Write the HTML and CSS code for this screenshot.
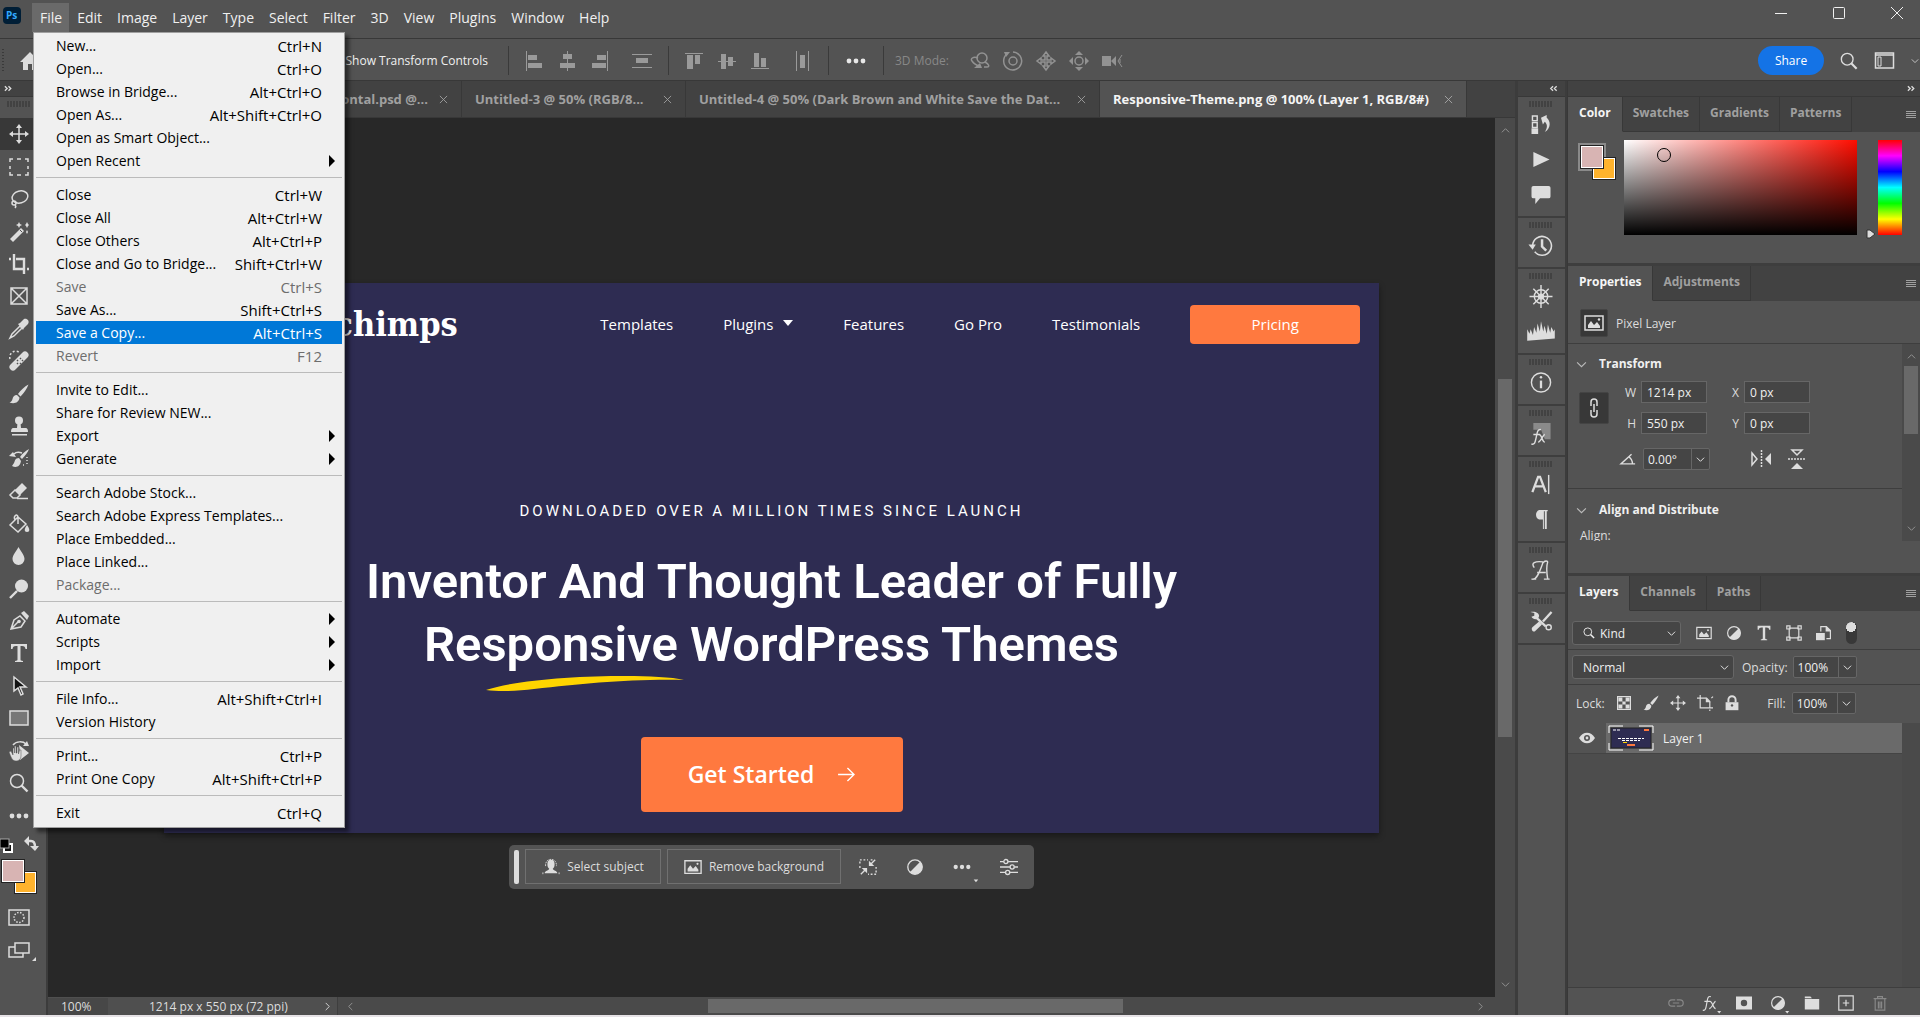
FILE: index.html
```html
<!DOCTYPE html>
<html lang="en">

<head>
  <meta charset="UTF-8" />
  <meta name="viewport" content="width=device-width, initial-scale=1.0" />
  <title>Responsive-Theme.png @ 100% (Layer 1, RGB/8#)</title>
  <link rel="stylesheet" href="styles.css">
</head>

<body>

  <!-- Icon sprite -->
  <svg class="sprite" aria-hidden="true">
    <symbol id="chev-down" viewBox="0 0 10 10"><path d="M1 3l4 4 4-4" class="line" /></symbol>
    <symbol id="chev-up" viewBox="0 0 10 10"><path d="M1 7l4-4 4 4" class="line" /></symbol>
    <symbol id="chev-left" viewBox="0 0 10 10"><path d="M7 1L3 5l4 4" class="line" /></symbol>
    <symbol id="chev-right" viewBox="0 0 10 10"><path d="M3 1l4 4-4 4" class="line" /></symbol>
    <symbol id="dbl-right" viewBox="0 0 10 10"><path d="M1 2.500l2.500 2.500L1 7.500M5 2.500l2.500 2.500L5 7.500" class="bold" /></symbol>
    <symbol id="dbl-left" viewBox="0 0 10 10"><path d="M4.500 2.500L2 5l2.500 2.500M8.500 2.500L6 5l2.500 2.500" class="bold" /></symbol>
    <symbol id="close" viewBox="0 0 10 10"><path d="M1 1l8 8M9 1L1 9" class="line" /></symbol>
    <symbol id="lines" viewBox="0 0 10 8"><path d="M0 .5h10M0 2.500h10M0 4.500h10M0 6.500h10" class="line" /></symbol>
    <symbol id="dots" viewBox="0 0 20 20"><circle cx="3" cy="10" r="2.400" /><circle cx="10" cy="10" r="2.400" /><circle cx="17" cy="10" r="2.400" /></symbol>
    <symbol id="search" viewBox="0 0 20 20"><circle cx="8" cy="8" r="6.500" class="bold" /><path d="M12.500 12.500l6 6" class="thick" /></symbol>
    <symbol id="move" viewBox="0 0 20 20"><path d="M10 3v14M3 10h14" class="bold" /><path d="M10 0l3 4H7zM10 20l3-4H7zM0 10l4-3v6zM20 10l-4-3v6z" /></symbol>
    <symbol id="half" viewBox="0 0 20 20"><circle cx="10" cy="10" r="8" class="bold" /><path d="M16 4A8.500 8.500 0 0 1 4 16z" /></symbol>
    <symbol id="picture" viewBox="0 0 20 20"><path d="M1 3h18v14H1z" class="bold" /><path d="M4 15v-3l3-4 3 4 3-3 3 4v2z" /><circle cx="15" cy="6.500" r="1.200" /></symbol>
    <symbol id="brush" viewBox="0 0 20 20"><path d="M19.500.5c-4 2-8 6-10.500 9.500l2.500 2.500c3-3 6.500-8 8-12zM8 11c-3 0-4 2-4.500 4-.4 1.800-1.500 3-3 3.500 4.500 1.500 9.500.5 10-5z" /></symbol>
    <symbol id="type" viewBox="0 0 20 20"><path d="M2 1h16v5h-1.500C16.200 4 15.500 3 13 3h-1.500v13.500c0 1 .8 1.300 2.500 1.500v1H6v-1c1.700-.2 2.500-.5 2.500-1.500V3H7C4.500 3 3.800 4 3.500 6H2z" /></symbol>
    <symbol id="fx" viewBox="0 0 20 20"><path d="M1 19c4 1 4-4 5-9s1-9 5-8M3 8h7M10 8c3 0 4 9 7 9M17 8c-2 0-5 9-8 9" class="bold" /></symbol>
  </svg>

  <header class="menubar">
    <svg class="logo" viewBox="0 0 18 17"><rect width="18" height="17" rx="4" fill="#001e36" /><text x="3" y="12" class="logo-text">Ps</text></svg>
    <nav>
      <button class="open">File</button>
      <button>Edit</button>
      <button>Image</button>
      <button>Layer</button>
      <button>Type</button>
      <button>Select</button>
      <button>Filter</button>
      <button>3D</button>
      <button>View</button>
      <button>Plugins</button>
      <button>Window</button>
      <button>Help</button>
    </nav>
    <div class="window-buttons">
      <button aria-label="Minimize"><svg viewBox="0 0 12 12"><path d="M0 6.500h12" class="line" /></svg></button>
      <button aria-label="Maximize"><svg viewBox="0 0 12 12"><rect x=".5" y=".5" width="11" height="11" rx="1" class="line" /></svg></button>
      <button aria-label="Close"><svg viewBox="0 0 12 12"><path d="M0 0l12 12M12 0L0 12" class="line" /></svg></button>
    </div>
  </header>

  <div class="options">
    <span class="grip-v"></span>
    <svg class="home" viewBox="0 0 20 20"><path d="M10 1L0 11h3v8h5v-6h4v6h5v-8h3z" /></svg>
    <label class="transform-controls"><input type="checkbox"> Show Transform Controls</label>
    <div class="group aligns">
      <svg viewBox="0 0 20 20"><path d="M2.500 0v20" class="line" /><path d="M4 4h9v5H4zM4 12h14v5H4z" /></svg>
      <svg viewBox="0 0 20 20"><path d="M10.500 0v20" class="line" /><path d="M6 3h9v5H6zM3 12h15v5H3z" /></svg>
      <svg viewBox="0 0 20 20"><path d="M17.500 0v20" class="line" /><path d="M7 4h9v5H7zM2 12h14v5H2z" /></svg>
      <svg class="spaced" viewBox="0 0 20 20"><path d="M0 3.500h20M0 16.500h20" class="line" /><path d="M4 7h12v5H4z" /></svg>
    </div>
    <div class="group aligns">
      <svg viewBox="0 0 20 20"><path d="M1 2.500h18" class="line" /><path d="M3 4h6v14H3zM11 4h5v9h-5z" /></svg>
      <svg viewBox="0 0 20 20"><path d="M1 10.500h18" class="line" /><path d="M4 3h5v15H4zM11 6h5v9h-5z" /></svg>
      <svg viewBox="0 0 20 20"><path d="M1 17.500h18" class="line" /><path d="M4 2h5v14H4zM11 7h5v9h-5z" /></svg>
      <svg class="spaced" viewBox="0 0 20 20"><path d="M4.500 0v20M16.500 0v20" class="line" /><path d="M8 4h5v13H8z" /></svg>
    </div>
    <div class="group more"><svg viewBox="0 0 20 20"><use href="#dots" /></svg></div>
    <div class="group mode">
      <span>3D Mode:</span>
      <svg viewBox="0 0 20 20"><circle cx="12" cy="7" r="5" class="bold" /><path d="M8 7c-5-2-8 1-6 3 2 3 6 5 9 6M15 11c4 2 5 5 2 5h-3" class="bold" /><path d="M4 17l6-5 2 5z" /></svg>
      <svg viewBox="0 0 20 20"><path d="M4 3a9 9 0 1 0 6-2" class="bold" /><circle cx="10" cy="10" r="4" class="bold" /><path d="M1 1h6l-4 5z" /></svg>
      <svg viewBox="0 0 20 20"><path d="M10 1l3 4h-2v4h4V7l4 3-4 3v-2h-4v4h2l-3 4-3-4h2v-4H5v2l-4-3 4-3v2h4V5H7z" class="bold" /></svg>
      <svg viewBox="0 0 20 20"><circle cx="10" cy="10" r="4" class="bold" /><path d="M10 0l4 4H6zM10 20l4-4H6zM0 10l4-4v8zM20 10l-4-4v8z" /></svg>
      <svg viewBox="0 0 20 20"><path d="M0 5h9v10H0zM9 10l5-5v10z" /><path d="M20 4l-4 6 4 6M18 8v4" class="line" /></svg>
    </div>
    <div class="options-right">
      <button class="share">Share</button>
      <svg class="search-icon" viewBox="0 0 20 20"><use href="#search" /></svg>
      <svg class="workspace" viewBox="0 0 20 17"><path d="M1 1h18v15H1zM1 3h18" class="bold" /><path d="M3.500 5v9h3V5z" class="line" /></svg>
      <svg class="chev" viewBox="0 0 10 10"><use href="#chev-down" /></svg>
    </div>
  </div>

  <main>
    <aside class="toolbar">
      <div class="strip"><svg viewBox="0 0 10 10"><use href="#dbl-right" /></svg></div>
      <span class="grip"></span>
      <div class="tools">
        <button class="active" aria-label="Move"><svg viewBox="0 0 20 20"><use href="#move" /></svg></button>
        <button aria-label="Marquee"><svg viewBox="0 0 20 20"><path d="M1 5V2h3M8 2h4M16 2h3v3M19 9v3M19 15v3h-3M12 18H8M4 18H1v-3M1 12V9" class="bold" /></svg></button>
        <button aria-label="Lasso"><svg viewBox="0 0 20 20"><ellipse cx="11" cy="8" rx="8" ry="6" transform="rotate(-15 11 8)" class="bold" /><circle cx="5" cy="14" r="2" class="bold" /><path d="M6 16c1 1 1 2 0 3" class="bold" /></svg></button>
        <button aria-label="Wand"><svg viewBox="0 0 20 20"><path d="M1 17L12 6l3 3L4 20z" /><path d="M11 8l2 2" stroke="#535353" stroke-width="1" /><path d="M10 0l1 2 2 1-2 1-1 2-1-2-2-1 2-1zM18 0l1 2 1 1-1 1-1 2-1-2-1-1 1-1zM18 8l1 2-1 2-1-2z" /></svg></button>
        <button aria-label="Crop"><svg viewBox="0 0 20 20"><path d="M5 0v15h11M0 5h2M7 5h8v15M18 15h2" class="thick" /></svg></button>
        <button aria-label="Frame"><svg viewBox="0 0 20 20"><path d="M2 2h16v16H2zM2 2l16 16M18 2L2 18" class="bold" /></svg></button>
        <button aria-label="Eyedropper"><svg viewBox="0 0 20 20"><path d="M11 7l2 2-8 8-4 2 2-4z" class="bold" /><path d="M9 5l2-1 4-4c3-1 6 2 4 5l-4 4-1 2z" /></svg></button>
        <button aria-label="Healing brush"><svg viewBox="0 0 20 20"><path d="M4 16L16 4" stroke="currentColor" stroke-width="7" stroke-linecap="round" /><path d="M1 8a6 6 0 0 1 10-6" class="bold" stroke-dasharray="2 2" /><path d="M8 9l1 1M11 12l1 1M11 7l1 1M13 9l1 1M8 12l1 1" stroke="#535353" stroke-width="1.500" /></svg></button>
        <button aria-label="Brush"><svg viewBox="0 0 20 20"><use href="#brush" /></svg></button>
        <button aria-label="Clone stamp"><svg viewBox="0 0 20 20"><circle cx="10" cy="4.500" r="4" /><path d="M8.500 7h3l.5 5h5c1 0 2 1 2 4H2c0-3 1-4 2-4h4zM3 18h15v1.500H3z" /></svg></button>
        <button aria-label="History brush"><svg viewBox="0 0 20 20"><path d="M20 0c-4 2-7 5-9 8l2 2c3-3 6-7 7-10zM10 9c-4 0-4 3-5 5l-2 3c4 2 8 1 9-5zM0 7l4-4 3 5z" /><path d="M5 5c2-2 5-2 8-1" class="bold" /><path d="M18 8v9M14 16h3" class="bold" stroke-dasharray="1 2" /></svg></button>
        <button aria-label="Eraser"><svg viewBox="0 0 20 20"><path d="M6 9l7-7 5 5-7 7z" /><path d="M6 9l5 5-3 3H4l-3-3z" class="bold" /><path d="M8 17.500h11" class="bold" /></svg></button>
        <button aria-label="Paint bucket"><svg viewBox="0 0 20 20"><path d="M1 11l8-8 8 7-8 8zM6 6c-2-4 2-7 3-3v7" class="bold" /><path d="M18 11c3 4 3 7 0 7s-3-3 0-7z" /></svg></button>
        <button aria-label="Blur"><svg viewBox="0 0 20 20"><path d="M9.500 1c2 4 6 8 6 12a6 6 0 0 1-12 0c0-4 4-8 6-12z" /></svg></button>
        <button aria-label="Dodge"><svg viewBox="0 0 20 20"><circle cx="12.500" cy="7" r="6.500" /><path d="M8 12l-7 7" class="thick" /></svg></button>
        <button aria-label="Pen"><svg viewBox="0 0 20 20"><path d="M2 18L5 9l6-4 5 5-4 6zM2 18l7-7" class="bold" /><circle cx="10" cy="10.500" r="1.800" /><path d="M12 2l3-2 5 5-2 4z" /></svg></button>
        <button aria-label="Type"><svg viewBox="0 0 20 20"><use href="#type" /></svg></button>
        <button aria-label="Path selection"><svg viewBox="0 0 20 20"><path d="M5 1v14l4-3 3 7 2-1-3-7h6z" fill="#111" class="outline" /></svg></button>
        <button aria-label="Rectangle"><svg viewBox="0 0 20 20"><rect x="1" y="3" width="18" height="14" fill="#777" class="outline" /></svg></button>
        <button aria-label="Rotate view"><svg viewBox="0 0 20 20"><path d="M4 4c3-4 10-4 13-1" class="bold" /><path d="M20 5h-6l4-5zM10 4l10 8-9 7v-8z" /><path d="M0 11l2-1 2 4V7h1.500v5V5H7v7h1V6h1.500v7l1-4H12v6c0 3-2 5-5 5-4 0-5-4-7-9z" stroke="#535353" stroke-width=".5" /></svg></button>
        <button aria-label="Zoom"><svg viewBox="0 0 20 20"><use href="#search" /></svg></button>
        <button aria-label="More tools"><svg viewBox="0 0 20 20"><use href="#dots" /></svg></button>
      </div>
      <svg class="colors" viewBox="0 0 45 64">
        <rect x="4" y="8" width="8" height="8" fill="#111" stroke="#fff" stroke-width="2" />
        <rect x="0" y="3" width="9" height="9" fill="#000" stroke="#aaa" />
        <path d="M28 5h3c3 0 4 2 4 6" class="thick" /><path d="M24 5l5-5v10zM35 15l-5-5h9z" />
        <rect x="14.500" y="35.500" width="22" height="22" fill="#ffb32d" stroke="#222" /><rect x="15.500" y="36.500" width="20" height="20" fill="none" stroke="#fff" />
        <rect x="1.500" y="23.500" width="23" height="23" fill="#d8b4b3" stroke="#222" /><rect x="2.500" y="24.500" width="21" height="21" fill="none" stroke="#fff" />
      </svg>
      <svg class="tool-low" viewBox="0 0 28 20"><rect x="1" y="2" width="20" height="15" class="bold" /><circle cx="11" cy="9.500" r="5" class="bold" stroke-dasharray="1.500 1.500" /></svg>
      <svg class="tool-low" viewBox="0 0 28 20"><path d="M7 6H1v10h14v-4" class="bold" /><rect x="7" y="2" width="14" height="10" class="bold" /><path d="M28 16v4h-4z" /></svg>
    </aside>

    <section class="document">
      <div class="tabs">
        <div class="tab tab-hidden"><span>ontal.psd @...</span><button aria-label="Close"><svg viewBox="0 0 10 10"><use href="#close" /></svg></button></div>
        <div class="tab tab-small"><span>Untitled-3 @ 50% (RGB/8...</span><button aria-label="Close"><svg viewBox="0 0 10 10"><use href="#close" /></svg></button></div>
        <div class="tab tab-large"><span>Untitled-4 @ 50% (Dark Brown and White Save the Dat...</span><button aria-label="Close"><svg viewBox="0 0 10 10"><use href="#close" /></svg></button></div>
        <div class="tab tab-active"><span>Responsive-Theme.png @ 100% (Layer 1, RGB/8#)</span><button aria-label="Close"><svg viewBox="0 0 10 10"><use href="#close" /></svg></button></div>
      </div>

      <div class="workarea">
        <div class="canvas">
          <article class="artwork">
            <div class="site-nav">
              <strong class="brand">chimps</strong>
              <nav>
                <a href="#">Templates</a>
                <a href="#">Plugins <svg viewBox="0 0 10 6"><path d="M0 0h10L5 6z" /></svg></a>
                <a href="#">Features</a>
                <a href="#">Go Pro</a>
                <a href="#">Testimonials</a>
              </nav>
              <a href="#" class="pricing">Pricing</a>
            </div>
            <p class="tagline">DOWNLOADED OVER A MILLION TIMES SINCE LAUNCH</p>
            <h1>Inventor And Thought Leader of Fully<br>Responsive WordPress Themes</h1>
            <svg class="swoosh" viewBox="0 0 198 16"><path d="M0 14C30 4 90 0 140 0c22 0 46 1 58 4-60-1-100 4-150 9-16 2-34 3-48 1z" /></svg>
            <a href="#" class="cta">Get Started <svg viewBox="0 0 18 16"><path d="M0 8h17M10 1l7 7-7 7" class="bold" /></svg></a>

            <div class="taskbar">
              <span class="handle"></span>
              <button><svg viewBox="0 0 20 20"><path d="M10 2c3 0 4 2 4 5s-1 4-2 5c0 2 5 2 5 5H3c0-3 5-3 5-5-1-1-2-2-2-5s1-5 4-5z" /><path d="M4 9c-1-10 13-10 12 0M1 18v-3M19 18v-3" class="line" stroke-dasharray="2 1" /></svg>Select subject</button>
              <button><svg viewBox="0 0 20 20"><use href="#picture" /></svg>Remove background</button>
              <div class="task-icons">
                <svg viewBox="0 0 20 20"><path d="M1 6V2h9M19 10v8h-9M1 9v3M13 2h2" class="bold" stroke-dasharray="2 2" /><path d="M11 9V3l6 6zM9 11v6l-6-6z" /><path d="M13 7l5-5M7 13l-5 5" class="bold" /></svg>
                <svg viewBox="0 0 20 20"><use href="#half" /></svg>
                <svg viewBox="0 0 20 20"><use href="#dots" /><path d="M23 24h5l-2.500 3z" /></svg>
                <svg viewBox="0 0 20 20"><path d="M0 4h4M9 4h11M0 10h11M16 10h4M0 16h6M11 16h9" class="bold" /><circle cx="6.500" cy="4" r="2.300" class="bold" /><circle cx="13.500" cy="10" r="2.300" class="bold" /><circle cx="8.500" cy="16" r="2.300" class="bold" /></svg>
              </div>
            </div>
          </article>
        </div>
        <div class="scroll-v">
          <svg viewBox="0 0 10 10"><use href="#chev-up" /></svg>
          <div class="track"><span class="thumb"></span></div>
          <svg viewBox="0 0 10 10"><use href="#chev-down" /></svg>
        </div>
      </div>

      <footer class="status">
        <span class="zoom">100%</span>
        <span class="size">1214 px x 550 px (72 ppi)</span>
        <svg viewBox="0 0 10 10"><use href="#chev-right" /></svg>
        <div class="scroll-h">
          <svg viewBox="0 0 10 10"><use href="#chev-left" /></svg>
          <div class="track"><span class="thumb"></span></div>
          <svg viewBox="0 0 10 10"><use href="#chev-right" /></svg>
        </div>
      </footer>
    </section>

    <aside class="dock">
      <div class="strip end"><svg viewBox="0 0 10 10"><use href="#dbl-left" /></svg></div>
      <div class="dock-group"><span class="grip"></span>
        <svg viewBox="0 0 20 20"><path d="M1 1h5v5H1zM1 8h5v5H1z" class="bold" /><path d="M0 14h7v6H0zM10 3l6-3v3c4 3 5 11-2 15 3-5 3-8 0-11l-2 3z" /></svg>
        <svg viewBox="0 0 20 20"><path d="M2 2l17 8-17 8z" /></svg>
        <svg viewBox="0 0 20 20"><path d="M2 1h16a2 2 0 0 1 2 2v9a2 2 0 0 1-2 2h-9l-5 6v-6H2a2 2 0 0 1-2-2V3a2 2 0 0 1 2-2z" /></svg>
      </div>
      <div class="dock-group"><span class="grip"></span>
        <svg class="wide" viewBox="0 0 24 22"><path d="M4 11a9 9 0 1 1 2 6" class="bold" /><path d="M0 10h7l-3 5z" /><path d="M13 5v7l4 4" class="thick" /></svg>
      </div>
      <div class="dock-group"><span class="grip"></span>
        <svg class="wide" viewBox="0 0 24 24"><circle cx="12" cy="12" r="7" class="bold" /><circle cx="12" cy="12" r="2.500" class="bold" /><path d="M12 0v24M0 12h24M4 4l16 16M20 4L4 20" class="bold" /></svg>
        <svg class="wide" viewBox="0 0 24 20"><path d="M0 18V8l2 4 1-4 2 5 1-7 2 5 1-8 2 7 1-9 2 9 1-5 2 7 1-8 2 7 1-5 2 4 1-2v8z" /></svg>
      </div>
      <div class="dock-group"><span class="grip"></span>
        <svg class="wide" viewBox="0 0 24 24"><circle cx="12" cy="12" r="10" class="bold" /><path d="M12 10v8" class="thick" /><circle cx="12" cy="6.500" r="1.300" /></svg>
      </div>
      <div class="dock-group"><span class="grip"></span>
        <svg class="wide" viewBox="0 0 24 24"><path d="M4 1h18v17h-6L12 8H4z" fill="#8a8a8a" /><path d="M2 23c4 1 4-3 5-7s1-9 5-8M4 13h7M10 13c3 0 3 8 6 8M16 13c-2 0-4 8-7 8" class="bold" /></svg>
      </div>
      <div class="dock-group"><span class="grip"></span>
        <svg class="wide" viewBox="0 0 24 24"><path d="M3 20L9 4h2l6 16M5 14h10" class="thick" /><path d="M20 2v20" class="bold" /></svg>
        <svg class="wide" viewBox="0 0 24 24"><path d="M14 12h-4a5.500 5.500 0 0 1 0-10h9v1.500h-1V22h-2V3.500h-1V22h-1z" /></svg>
      </div>
      <div class="dock-group"><span class="grip"></span>
        <svg class="wide" viewBox="0 0 24 24"><path d="M3 21c5 1 8-9 11-17 2-3 5-2 5-1-2 6-1 12 0 18h2M8 14h9M5 9C1 4 6 2 14 3M2 21h5M15 21h6" class="bold" /></svg>
      </div>
      <div class="dock-group"><span class="grip"></span>
        <svg class="wide" viewBox="0 0 24 24"><path d="M6 7l11 10" class="thick" /><path d="M1 2l4 1v3l-3 1c2 4 8 3 8-1 0-3-4-5-9-4z" /><circle cx="20" cy="18" r="2.700" class="bold" /><path d="M23 2l-9 10" class="thick" /><path d="M3 18l7-6 3 3-7 7c-2 2-5-2-3-4z" /></svg>
      </div>
    </aside>

    <aside class="panels">
      <div class="strip end"><svg viewBox="0 0 10 10"><use href="#dbl-right" /></svg></div>

      <section class="panel panel-color">
        <div class="panel-tabs">
          <button class="selected">Color</button>
          <button>Swatches</button>
          <button>Gradients</button>
          <button>Patterns</button>
          <svg viewBox="0 0 10 8"><use href="#lines" /></svg>
        </div>
        <div class="color-body">
          <svg class="swatches" viewBox="0 0 40 40">
            <rect width="28" height="28" fill="#8a8a8a" />
            <rect x="14.500" y="14.500" width="23" height="22" fill="#ffb32d" stroke="#222" /><rect x="15.500" y="15.500" width="21" height="20" fill="none" stroke="#fff" />
            <rect x="2.500" y="2.500" width="23" height="23" fill="#d8b4b3" stroke="#222" /><rect x="3.500" y="3.500" width="21" height="21" fill="none" stroke="#fff" />
          </svg>
          <div class="field"><span class="picker"></span></div>
          <div class="hue-wrap">
            <svg viewBox="0 0 10 10"><path d="M1 1h3l5 4-5 4H1z" stroke="#333" /></svg>
            <input type="range" class="hue" min="0" max="360" value="0" aria-label="Hue">
          </div>
        </div>
      </section>

      <section class="panel panel-props">
        <div class="panel-tabs">
          <button class="selected">Properties</button>
          <button>Adjustments</button>
          <svg viewBox="0 0 10 8"><use href="#lines" /></svg>
        </div>
        <div class="layer-kind">
          <span class="dark-box"><svg viewBox="0 0 20 20"><use href="#picture" /></svg></span>
          Pixel Layer
        </div>
        <div class="props-scroll">
          <div class="props-body">
            <div class="transform">
              <h2><svg viewBox="0 0 10 10"><use href="#chev-down" /></svg>Transform</h2>
              <div class="transform-grid">
                <button class="dark-box link-box" aria-label="Link"><svg viewBox="0 0 12 20"><path d="M3 8V4a3 3 0 0 1 6 0v4M3 12v4a3 3 0 0 0 6 0v-4M6 6v8" class="bold" /></svg></button>
                <label for="w">W</label><input id="w" value="1214 px">
                <label for="x">X</label><input id="x" value="0 px">
                <label for="h">H</label><input id="h" value="550 px">
                <label for="y">Y</label><input id="y" value="0 px">
              </div>
              <div class="angle">
                <label for="angle" aria-label="Angle"><svg viewBox="0 0 18 14"><path d="M13 1L1 12h16M10 4c3 2 4 5 4 8" class="bold" /></svg></label>
                <span class="combo"><input id="angle" value="0.00°"><button aria-label="Angle presets"><svg viewBox="0 0 10 10"><use href="#chev-down" /></svg></button></span>
                <svg class="flip" viewBox="0 0 20 20"><path d="M1 4l5 6-5 6z" class="bold" /><path d="M20 4l-6 6 6 6z" /><path d="M10.500 1v18" class="bold" stroke-dasharray="2 1" /></svg>
                <svg class="flip" viewBox="0 0 20 20"><path d="M5 1h10l-5 5z" class="bold" /><path d="M4 20h12l-6-6z" /><path d="M1 10h18" class="bold" stroke-dasharray="2 1" /></svg>
              </div>
            </div>
            <h2><svg viewBox="0 0 10 10"><use href="#chev-down" /></svg>Align and Distribute</h2>
            <p class="align-label">Align:</p>
          </div>
          <div class="scroll-v small">
            <svg viewBox="0 0 10 10"><use href="#chev-up" /></svg>
            <div class="track"><span class="thumb"></span></div>
            <svg viewBox="0 0 10 10"><use href="#chev-down" /></svg>
          </div>
        </div>
      </section>

      <section class="panel panel-layers">
        <div class="panel-tabs">
          <button class="selected">Layers</button>
          <button>Channels</button>
          <button>Paths</button>
          <svg viewBox="0 0 10 8"><use href="#lines" /></svg>
        </div>
        <div class="layer-row filter">
          <span class="select kind"><svg class="lens" viewBox="0 0 20 20"><use href="#search" /></svg><select aria-label="Filter type"><option>Kind</option></select><svg class="arrow" viewBox="0 0 10 10"><use href="#chev-down" /></svg></span>
          <div class="filter-icons">
            <svg viewBox="0 0 20 20"><use href="#picture" /></svg>
            <svg viewBox="0 0 20 20"><use href="#half" /></svg>
            <svg viewBox="0 0 20 20"><use href="#type" /></svg>
            <svg viewBox="0 0 20 20"><path d="M4 4h12v12H4z" class="bold" /><path d="M1 1h4v4H1zM15 1h4v4h-4zM1 15h4v4H1zM15 15h4v4h-4z" class="bold" /></svg>
            <svg viewBox="0 0 20 20"><path d="M0 10h11v9H0z" /><path d="M6 8V2h7l5 5v10h-5" class="bold" /><path d="M12 1v7h7z" /></svg>
          </div>
          <span class="switch"></span>
        </div>
        <div class="layer-row blend">
          <span class="select mode-select"><select aria-label="Blend mode"><option>Normal</option></select><svg class="arrow" viewBox="0 0 10 10"><use href="#chev-down" /></svg></span>
          <label for="opacity">Opacity:</label>
          <span class="combo"><input id="opacity" value="100%"><button aria-label="Opacity slider"><svg viewBox="0 0 10 10"><use href="#chev-down" /></svg></button></span>
        </div>
        <div class="layer-row lock">
          <span>Lock:</span>
          <div class="lock-icons">
            <svg viewBox="0 0 20 20"><rect x="2" y="2" width="16" height="16" class="bold" /><path d="M3 3h5v5H3zM12 3h5v5h-5zM8 8h4v4H8zM3 12h5v5H3zM12 12h5v5h-5z" /></svg>
            <svg viewBox="0 0 20 20"><use href="#brush" /></svg>
            <svg viewBox="0 0 20 20"><use href="#move" /></svg>
            <svg viewBox="0 0 20 20"><path d="M4 0v16h16M0 4h12l4 4v8M16 18v2M18 4l2-2" class="bold" /><path d="M11 3v6h6z" /></svg>
            <svg viewBox="0 0 20 20"><path d="M2 9h16v10H2z" /><path d="M5.500 9V6a4.500 4.500 0 0 1 9 0v3" class="thick" /><circle cx="10" cy="13" r="1.500" fill="#535353" /></svg>
          </div>
          <label for="fill">Fill:</label>
          <span class="combo"><input id="fill" value="100%"><button aria-label="Fill slider"><svg viewBox="0 0 10 10"><use href="#chev-down" /></svg></button></span>
        </div>
        <div class="layer-list">
          <div class="layer">
            <span class="eye"><svg viewBox="0 0 16 12"><path d="M0 6c4-7 12-7 16 0-4 7-12 7-16 0z" /><circle cx="8" cy="6" r="3" fill="#535353" /><circle cx="8" cy="6" r="1.400" /></svg></span>
            <div class="layer-main">
              <svg viewBox="0 0 46 26"><rect x="3" y="3" width="40" height="20" fill="#2e2c52" stroke="#222" /><path d="M1 8V1h14M31 1h14v7M45 18v7H31M15 25H1v-7" class="frame" /><path d="M10 13.500h26M14 15.500h18M5 5h8" stroke="#fff" stroke-dasharray="3 1" /><path d="M19 20h8M36 5h5" stroke="#ff793f" stroke-width="2" /><path d="M15 17.500h4" stroke="#ffd500" /></svg>
              Layer 1
            </div>
          </div>
        </div>
        <div class="layer-footer">
          <svg class="dim" viewBox="0 0 20 20"><path d="M9 6H5a4 4 0 0 0 0 8h4M11 6h4a4 4 0 0 1 0 8h-4M6 10h8" class="bold" /></svg>
          <svg viewBox="0 0 20 20"><use href="#fx" /><path d="M19 20h5l-2.500 3z" /></svg>
          <svg viewBox="0 0 20 20"><path d="M0 2h20v16H0zM10 6a4 4 0 1 0 0 8 4 4 0 0 0 0-8z" fill-rule="evenodd" /></svg>
          <svg viewBox="0 0 20 20"><use href="#half" /><path d="M19 20h5l-2.500 3z" /></svg>
          <svg viewBox="0 0 20 20"><path d="M1 2h7l2 2H1zM1 5h18v13H1z" /></svg>
          <svg viewBox="0 0 20 20"><path d="M1 1h18v18H1zM10 6v8M6 10h8" class="bold" /></svg>
          <svg class="dim" viewBox="0 0 20 20"><path d="M2 4.500h16M7 4V2h6v2M4 5v14h12V5M8 8v9M10 8v9M12 8v9" class="bold" /></svg>
        </div>
      </section>
    </aside>
  </main>

  <!-- File menu -->
  <div class="file-menu">
    <ul>
      <li><button>New...<kbd>Ctrl+N</kbd></button></li>
      <li><button>Open...<kbd>Ctrl+O</kbd></button></li>
      <li><button>Browse in Bridge...<kbd>Alt+Ctrl+O</kbd></button></li>
      <li><button>Open As...<kbd>Alt+Shift+Ctrl+O</kbd></button></li>
      <li><button>Open as Smart Object...</button></li>
      <li><button class="sub">Open Recent</button></li>
    </ul>
    <ul>
      <li><button>Close<kbd>Ctrl+W</kbd></button></li>
      <li><button>Close All<kbd>Alt+Ctrl+W</kbd></button></li>
      <li><button>Close Others<kbd>Alt+Ctrl+P</kbd></button></li>
      <li><button>Close and Go to Bridge...<kbd>Shift+Ctrl+W</kbd></button></li>
      <li><button disabled>Save<kbd>Ctrl+S</kbd></button></li>
      <li><button>Save As...<kbd>Shift+Ctrl+S</kbd></button></li>
      <li><button class="current">Save a Copy...<kbd>Alt+Ctrl+S</kbd></button></li>
      <li><button disabled>Revert<kbd>F12</kbd></button></li>
    </ul>
    <ul>
      <li><button>Invite to Edit...</button></li>
      <li><button>Share for Review NEW...</button></li>
      <li><button class="sub">Export</button></li>
      <li><button class="sub">Generate</button></li>
    </ul>
    <ul>
      <li><button>Search Adobe Stock...</button></li>
      <li><button>Search Adobe Express Templates...</button></li>
      <li><button>Place Embedded...</button></li>
      <li><button>Place Linked...</button></li>
      <li><button disabled>Package...</button></li>
    </ul>
    <ul>
      <li><button class="sub">Automate</button></li>
      <li><button class="sub">Scripts</button></li>
      <li><button class="sub">Import</button></li>
    </ul>
    <ul>
      <li><button>File Info...<kbd>Alt+Shift+Ctrl+I</kbd></button></li>
      <li><button>Version History</button></li>
    </ul>
    <ul>
      <li><button>Print...<kbd>Ctrl+P</kbd></button></li>
      <li><button>Print One Copy<kbd>Alt+Shift+Ctrl+P</kbd></button></li>
    </ul>
    <ul>
      <li><button>Exit<kbd>Ctrl+Q</kbd></button></li>
    </ul>
  </div>

</body>

</html>
```

FILE: styles.css
```css
* {
  box-sizing: border-box;
}

body {
  margin: 0;
  height: 100vh;
  display: flex;
  flex-direction: column;
  overflow: hidden;
  background-color: #535353;
  border-bottom: 2px solid #e6e2e6;
  color: #ddd;
  font-family: "Open Sans", "Noto Sans", sans-serif;
  font-size: 12px;
}

button,
input,
select {
  margin: 0;
  padding: 0;
  border: none;
  background: none;
  color: inherit;
  font: inherit;
}

a {
  color: inherit;
  text-decoration: none;
}

svg {
  display: block;
  flex: none;
  width: 20px;
  height: 20px;
  fill: currentColor;
  overflow: visible;
}

.sprite {
  position: absolute;
  width: 0;
  height: 0;
}

.line,
.bold,
.thick {
  fill: none;
  stroke: currentColor;
  stroke-width: 1px;
}

.bold {
  stroke-width: 1.5px;
}

.thick {
  stroke-width: 2.4px;
}

.outline {
  stroke: #ddd;
  stroke-width: 1.5px;
}

/* Menu bar */
.menubar {
  flex: none;
  display: flex;
  height: 39px;
  padding: 3px 17px 0 3px;
  border-bottom: 1px solid #383838;
  color: #f0f0f0;
}

.menubar .logo {
  width: 18px;
  height: 17px;
  margin: 4px 11px 0 0;
}

.logo-text {
  fill: #31a8ff;
  font-size: 10px;
  font-weight: bold;
}

.menubar nav {
  display: flex;
  height: 29px;
  font-size: 14px;
}

.menubar nav button {
  padding: 0 7px 0 8px;
}

.menubar nav .open {
  background-color: #6a6a6a;
}

.window-buttons {
  display: flex;
  gap: 46px;
  height: 20px;
  margin-left: auto;
}

.window-buttons svg {
  width: 12px;
  height: 12px;
}

/* Options bar */
.options {
  flex: none;
  display: flex;
  align-items: center;
  height: 42px;
  padding-top: 2px;
  border-bottom: 1px solid #383838;
}

.grip-v {
  width: 2px;
  height: 24px;
  margin-left: 2px;
  background: repeating-linear-gradient(#3a3a3a 0 1px, transparent 1px 3px);
}

.home {
  margin-left: 16px;
}

.transform-controls {
  display: flex;
  align-items: center;
  justify-content: flex-end;
  gap: 8px;
  width: 448px;
  margin-right: 20px;
  color: #f0f0f0;
}

.group {
  display: flex;
  align-items: center;
  height: 29px;
  border-left: 1px solid #3a3a3a;
}

.aligns {
  gap: 13px;
  width: 160px;
  padding-left: 15px;
  color: #9a9a9a;
}

.aligns .spaced {
  margin-left: 9px;
}

.more {
  width: 55px;
  padding-left: 17px;
  color: #e8e8e8;
}

.mode {
  gap: 13px;
  padding-left: 11px;
  color: #929292;
}

.mode span {
  margin-right: 8px;
  color: #888;
}

.options-right {
  display: flex;
  align-items: center;
  gap: 16px;
  margin-left: auto;
  padding-right: 1px;
}

.share {
  width: 66px;
  height: 29px;
  border-radius: 15px;
  background-color: #1473e6;
  color: #fff;
}

.search-icon {
  width: 18px;
  height: 18px;
}

.workspace {
  width: 21px;
  height: 17px;
}

.chev {
  width: 8px;
  height: 8px;
}

/* Main layout */
main {
  flex: 1;
  min-height: 0;
  display: flex;
}

.strip {
  flex: none;
  display: flex;
  align-items: center;
  height: 16px;
  padding: 0 4px;
  background-color: #424242;
  border-bottom: 1px solid #383838;
}

.strip.end {
  justify-content: flex-end;
}

.strip svg {
  width: 9px;
  height: 9px;
}

.grip {
  display: block;
  flex: none;
  width: 24px;
  height: 6px;
  background: repeating-linear-gradient(90deg, #424242 0 2px, transparent 2px 3px);
}

.toolbar {
  flex: none;
  display: flex;
  flex-direction: column;
  width: 48px;
  border-right: 2px solid #3c3c3c;
}

.toolbar .grip {
  margin: 4px 0 11px 7px;
}

.tools {
  flex: 0 0 714px;
  display: grid;
  grid-auto-rows: 1fr;
  width: 44px;
}

.tools button {
  display: flex;
  align-items: center;
  padding-left: 9px;
}

.tools .active {
  background-color: #383838;
}

.colors {
  width: 45px;
  height: 64px;
  margin: 4px 0 8px;
}

.tool-low {
  width: 28px;
  height: 20px;
  margin: 0 0 13px 8px;
}

/* Document */
.document {
  flex: 1;
  min-width: 0;
  display: flex;
  flex-direction: column;
}

.tabs {
  flex: none;
  display: flex;
  height: 37px;
  background-color: #424242;
  border-bottom: 1px solid #383838;
  color: #a0a0a0;
  font-size: 13px;
  font-weight: bold;
}

.tab {
  display: flex;
  align-items: center;
  justify-content: space-between;
  padding: 0 13px;
  border-right: 1px solid #383838;
  white-space: nowrap;
}

.tab svg {
  width: 9px;
  height: 9px;
}

.tab-hidden {
  width: 414px;
  justify-content: flex-end;
  gap: 11px;
}

.tab-small {
  width: 224px;
}

.tab-large {
  width: 414px;
}

.tab-active {
  width: 367px;
  background-color: #535353;
  color: #f5f5f5;
}

.tab-active button {
  color: #a8a8a8;
}

.workarea {
  flex: 1;
  min-height: 0;
  display: flex;
}

.canvas {
  flex: 1;
  display: flex;
  align-items: center;
  justify-content: center;
  background-color: #282828;
}

.scroll-v {
  flex: none;
  display: flex;
  flex-direction: column;
  align-items: center;
  width: 20px;
  padding: 8px 0;
  background-color: #4a4a4a;
  color: #999;
}

.scroll-v svg,
.status svg {
  width: 9px;
  height: 9px;
}

.scroll-v .track {
  flex: 1;
  display: flex;
  width: 14px;
  padding: 244px 0 243px;
}

.thumb {
  flex: 1;
  background-color: #696969;
}

.status {
  flex: none;
  display: flex;
  align-items: center;
  height: 18px;
  background-color: #4f4f4f;
  color: #ddd;
}

.zoom {
  width: 60px;
  padding-left: 13px;
  background-color: #474747;
}

.size {
  width: 215px;
  padding-left: 41px;
}

.scroll-h {
  flex: 1;
  display: flex;
  align-items: center;
  height: 18px;
  margin-left: 5px;
  padding: 0 30px 0 8px;
  border-left: 1px solid #3e3e3e;
  background-color: #4a4a4a;
  color: #999;
}

.scroll-h .track {
  flex: 1;
  display: flex;
  height: 14px;
  padding: 0 31%;
}

/* Artwork */
.artwork {
  position: relative;
  display: flex;
  flex-direction: column;
  align-items: center;
  width: 84%;
  height: 550px;
  background-color: #2e2c52;
  box-shadow: 0 3px 6px rgba(0, 0, 0, 0.4);
  color: #fff;
}

.site-nav {
  align-self: stretch;
  display: flex;
  align-items: center;
  justify-content: flex-end;
  height: 39px;
  margin: 22px 19px 150px 0;
  font-size: 15px;
}

.brand {
  width: 294px;
  margin-right: auto;
  font-family: "DejaVu Serif Condensed", "DejaVu Serif", serif;
  font-size: 34px;
  text-align: right;
}

.site-nav nav {
  display: flex;
  gap: 50px;
}

.site-nav nav svg {
  display: inline-block;
  width: 10px;
  height: 6px;
  margin: 0 0 4px 6px;
}

.pricing {
  width: 170px;
  margin-left: 50px;
  border-radius: 4px;
  background-color: #ff793f;
  line-height: 39px;
  text-align: center;
}

.tagline {
  margin: 0;
  font-family: Roboto, sans-serif;
  font-size: 15px;
  line-height: 34px;
  letter-spacing: 3px;
}

.artwork h1 {
  margin: 22px 0 0;
  font-family: Roboto, sans-serif;
  font-size: 49px;
  font-weight: 600;
  line-height: 63px;
  text-align: center;
}

.swoosh {
  width: 198px;
  height: 16px;
  margin: 0 374px 45px 0;
  color: #ffd500;
}

.cta {
  display: flex;
  align-items: center;
  justify-content: center;
  gap: 24px;
  width: 262px;
  height: 75px;
  border-radius: 4px;
  background-color: #ff793f;
  font-size: 23px;
  font-weight: 600;
}

.cta svg {
  width: 17px;
  height: 15px;
}

.taskbar {
  position: absolute;
  top: 562px;
  left: 0;
  right: 0;
  display: flex;
  align-items: center;
  gap: 6px;
  width: 525px;
  height: 44px;
  margin: auto;
  padding-left: 5px;
  border-radius: 5px;
  background-color: #535353;
  color: #ddd;
}

.taskbar .handle {
  width: 5px;
  height: 34px;
  border-radius: 2px;
  background-color: #ddd;
}

.taskbar button {
  display: flex;
  align-items: center;
  justify-content: center;
  gap: 7px;
  width: 136px;
  height: 35px;
  border: 1px solid #707070;
}

.taskbar button + button {
  width: 174px;
}

.taskbar svg {
  width: 18px;
  height: 18px;
}

.task-icons {
  display: flex;
  gap: 29px;
  padding-left: 12px;
}

/* Dock of collapsed panels */
.dock {
  flex: none;
  width: 52px;
  border: solid #3c3c3c;
  border-width: 0 2px 0 3px;
}

.dock .strip {
  padding-right: 7px;
}

.dock-group {
  padding: 4px 0;
  border-bottom: 2px solid #3e3e3e;
}

.dock-group .grip {
  margin-left: 11px;
}

.dock-group svg {
  width: 46px;
  height: 35px;
  padding: 8px 0;
}

.dock-group .wide {
  padding: 6px 0;
}

/* Panels */
.panels {
  flex: none;
  display: flex;
  flex-direction: column;
  width: 353px;
  border-left: 1px solid #383838;
}

.panel {
  flex: none;
  border-bottom: 3px solid #3e3e3e;
}

.panel-tabs {
  display: flex;
  align-items: center;
  height: 35px;
  background-color: #424242;
  color: #a0a0a0;
}

.panel-tabs button {
  align-self: stretch;
  padding: 0 10px 4px 10px;
  border: solid #383838;
  border-width: 0 1px 1px 0;
  font-weight: bold;
}

.panel-tabs .selected {
  padding: 0 11px 4px;
  background-color: #535353;
  border-bottom-color: #535353;
  color: #f5f5f5;
}

.panel-tabs svg {
  width: 10px;
  height: 8px;
  margin: 0 4px 0 auto;
}

.panel-color {
  height: 169px;
}

.color-body {
  display: flex;
  padding: 8px 18px 0 10px;
}

.swatches {
  width: 40px;
  height: 40px;
  margin-top: 3px;
}

.field {
  position: relative;
  flex: 1;
  height: 95px;
  margin: 0 9px 0 6px;
  background: linear-gradient(to top, #000, transparent), linear-gradient(to right, #fff, #ff0d00);
}

.picker {
  position: absolute;
  top: 8px;
  left: 33px;
  width: 14px;
  height: 14px;
  border: 1px solid #000;
  border-radius: 50%;
}

.hue-wrap {
  display: flex;
  align-items: flex-end;
  gap: 2px;
}

.hue-wrap svg {
  width: 10px;
  height: 10px;
  margin-bottom: -4px;
}

.hue {
  appearance: none;
  writing-mode: vertical-lr;
  width: 24px;
  height: 95px;
  background: linear-gradient(#f00, #f0f, #00f, #0ff, #0f0, #ff0, #f00);
}

.hue::-webkit-slider-thumb {
  appearance: none;
  width: 24px;
  height: 1px;
}

.panel-props {
  height: 310px;
}

.layer-kind {
  display: flex;
  align-items: center;
  gap: 8px;
  height: 43px;
  padding: 2px 12px 0;
  border-bottom: 1px solid #3e3e3e;
}

.dark-box {
  display: flex;
  align-items: center;
  justify-content: center;
  width: 28px;
  height: 28px;
  border: 1px solid #444;
  border-radius: 2px;
  background-color: #383838;
}

.props-scroll {
  display: flex;
  height: 197px;
  overflow: hidden;
}

.props-body {
  flex: 1;
}

.props-body h2 {
  display: flex;
  align-items: center;
  gap: 12px;
  margin: 0;
  padding-left: 8px;
  font-size: 12px;
  line-height: 18px;
  color: #f0f0f0;
}

.props-body h2 svg {
  width: 11px;
  height: 11px;
  color: #bbb;
}

.transform {
  height: 145px;
  margin-bottom: 12px;
  padding-top: 11px;
  border-bottom: 1px solid #3e3e3e;
}

.transform-grid {
  display: grid;
  grid-template-columns: 30px 22px 66px 27px 66px;
  gap: 9px 5px;
  align-items: center;
  padding: 8px 0 0 11px;
  text-align: right;
}

.link-box {
  grid-row: 1 / 3;
  width: 30px;
  height: 32px;
}

.link-box svg {
  width: 12px;
  height: 20px;
}

.transform-grid input,
.combo,
.select {
  height: 22px;
  border: 1px solid #666;
  background-color: #454545;
  color: #f0f0f0;
}

.transform-grid input {
  width: 66px;
  padding-left: 5px;
}

.angle {
  display: flex;
  align-items: center;
  height: 22px;
  margin: 14px 0 0 52px;
}

.angle label svg {
  width: 16px;
  height: 13px;
}

.angle .combo {
  width: 67px;
  margin: 0 41px 0 7px;
}

.angle .combo input {
  width: 47px;
}

.flip {
  margin-right: 16px;
}

.combo {
  display: flex;
  align-items: stretch;
  width: 64px;
  border-radius: 2px;
}

.combo input {
  width: 44px;
  padding-left: 4px;
}

.combo button {
  width: 18px;
  padding-left: 4px;
  border-left: 1px solid #666;
}

.combo svg {
  width: 9px;
  height: 9px;
}

.align-label {
  margin: 9px 0 0 12px;
  line-height: 16px;
}

.scroll-v.small {
  width: 18px;
}

.small .track {
  padding: 5px 0 90px;
}

/* Layers */
.panel-layers {
  flex: 1;
  display: flex;
  flex-direction: column;
  border: none;
}

.layer-row {
  flex: none;
  display: flex;
  align-items: center;
  height: 35px;
  padding-left: 4px;
}

.filter {
  height: 39px;
  padding-top: 6px;
}

.filter,
.blend {
  border-bottom: 1px solid #3e3e3e;
}

.select {
  position: relative;
  display: flex;
  align-items: center;
  height: 24px;
  border-radius: 3px;
}

.select select {
  appearance: none;
  flex: 1;
  height: 22px;
  padding-left: 10px;
}

.select .lens {
  width: 12px;
  height: 12px;
  margin: 0 -5px 0 10px;
}

.select .arrow {
  position: absolute;
  right: 4px;
  width: 9px;
  height: 9px;
  pointer-events: none;
}

.kind {
  width: 109px;
}

.mode-select {
  width: 162px;
}

.blend label {
  margin: 0 5px 0 8px;
}

.filter-icons,
.lock-icons {
  display: flex;
  gap: 14px;
  margin-left: 15px;
}

.filter-icons svg {
  width: 16px;
  height: 16px;
}

.switch {
  display: block;
  width: 11px;
  height: 22px;
  margin-left: 14px;
  border-radius: 6px;
  background: radial-gradient(circle at 5px 5px, #ddd 5px, #383838 5px);
}

.lock {
  height: 38px;
  padding: 0 0 2px 8px;
}

.lock-icons {
  gap: 11px;
  margin-left: 11px;
}

.lock-icons svg {
  width: 16px;
  height: 16px;
}

.lock label {
  width: 46px;
  margin-right: 6px;
  text-align: right;
}

.layer-list {
  flex: 1;
  background-color: #4d4d4d;
  border-right: 18px solid #4a4a4a;
}

.layer {
  display: flex;
  height: 31px;
  border-bottom: 1px solid #444;
}

.eye {
  display: flex;
  align-items: center;
  width: 38px;
  padding-left: 11px;
  background-color: #535353;
}

.eye svg {
  width: 16px;
  height: 12px;
}

.layer-main {
  flex: 1;
  display: flex;
  align-items: center;
  gap: 9px;
  padding-left: 2px;
  background-color: #6a6a6a;
  color: #f0f0f0;
}

.layer-main svg {
  width: 46px;
  height: 26px;
}

.frame {
  fill: none;
  stroke: #fff;
}

.layer-footer {
  flex: none;
  display: flex;
  align-items: center;
  justify-content: flex-end;
  gap: 18px;
  height: 28px;
  padding: 2px 32px 0 0;
  border-top: 1px solid #3e3e3e;
}

.layer-footer svg {
  width: 16px;
  height: 16px;
}

.layer-footer .dim {
  color: #888;
}

/* File menu */
.file-menu {
  position: absolute;
  top: 32px;
  left: 33px;
  width: 312px;
  padding: 1px 2px 3px;
  border: 1px solid #a0a0a0;
  background-color: #f0f0f0;
  box-shadow: 4px 4px 4px rgba(0, 0, 0, 0.5);
  color: #000;
  font-size: 14px;
}

.file-menu ul {
  margin: 0;
  padding: 0;
  list-style: none;
}

.file-menu ul + ul {
  margin-top: 5px;
  padding-top: 5px;
  border-top: 1px solid #bbb;
}

.file-menu button {
  display: flex;
  align-items: center;
  justify-content: space-between;
  width: 100%;
  height: 23px;
  padding: 0 20px;
}

.file-menu kbd {
  font: inherit;
  font-size: 15px;
}

.file-menu button:disabled {
  color: #6d6d6d;
}

.file-menu .current {
  background-color: #0078d7;
  color: #fff;
}

.file-menu .sub {
  padding-right: 7px;
}

.file-menu .sub::after {
  content: "";
  border: solid transparent;
  border-width: 6px 0 6px 6px;
  border-left-color: #000;
}
```
